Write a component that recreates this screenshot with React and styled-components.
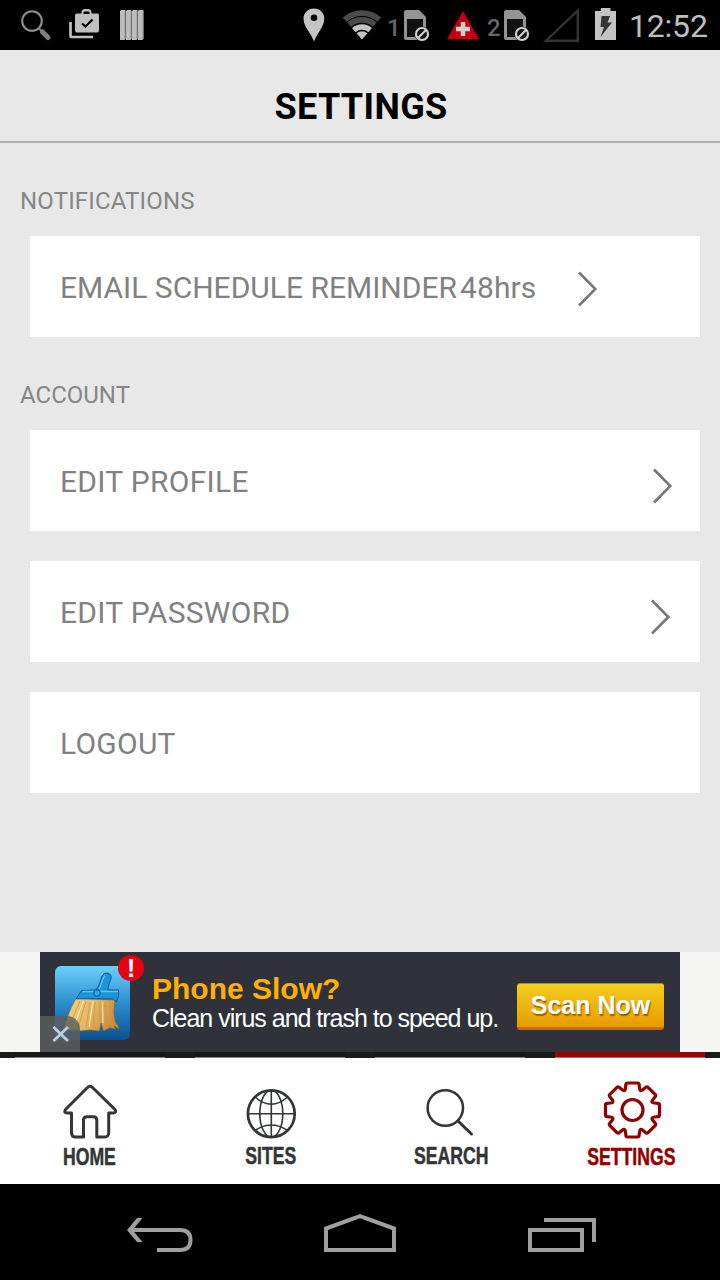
import React from 'react';
import styled, { createGlobalStyle } from 'styled-components';

const GlobalStyle = createGlobalStyle`
  body {
    margin: 0;
    background: #e8e8e8;
  }

  * {
    box-sizing: border-box;
  }

  svg {
    display: block;
    flex: none;
    overflow: visible;
  }
`;

const Screen = styled.div`
  display: flex;
  flex-direction: column;
  width: 720px;
  height: 1280px;
  overflow: hidden;
  background: #e8e8e8;
  font-family: Roboto, sans-serif;
`;

/* status bar */

const StatusBar = styled.header`
  display: flex;
  justify-content: space-between;
  height: 50px;
  background: #000;
`;

const StatusGroup = styled.div`
  display: flex;
  align-items: flex-start;
  padding: ${props => props.$padding || "0"};
`;

const StatusIcon = styled.svg.attrs(props => ({
  viewBox: `0 0 ${props.width} 50`,
  height: 50,
  fill: "none",
}))`
  margin-left: ${props => props.$gap || 0}px;
`;

const SimNumber = styled.span`
  width: 15px;
  margin-left: ${props => props.$gap}px;
  color: #666;
  font-size: 24px;
  font-weight: 500;
  line-height: 56px;
`;

const Clock = styled.span`
  width: 80px;
  margin-left: 13px;
  color: #bebebe;
  font-size: 32px;
  letter-spacing: -0.2px;
  line-height: 52px;
  white-space: nowrap;
`;

/* page */

const TitleBar = styled.div`
  height: 93px;
  border-bottom: 2px solid #abb0b2;
  text-align: center;
`;

const Title = styled.h1`
  margin: 0;
  padding-left: 2px;
  color: #000;
  font-size: 36px;
  font-weight: 700;
  letter-spacing: 0.35px;
  line-height: 114px;
`;

const Content = styled.main`
  display: flex;
  flex-direction: column;
  flex: 1;
`;

const SectionTitle = styled.h2`
  height: 93px;
  margin: 0;
  padding-left: 20px;
  color: #868686;
  font-size: 24px;
  font-weight: 400;
  letter-spacing: ${props => props.$tracking || 0}px;
  line-height: 117px;
`;

const Section = styled.section`
  display: flex;
  flex-direction: column;
`;

const Rows = styled.div`
  display: flex;
  flex-direction: column;
  gap: 30px;
  padding: 0 20px 0 30px;
`;

const Row = styled.div`
  display: flex;
  align-items: center;
  height: 101px;
  padding: 2px ${props => props.$end || 28}px 0 30px;
  background: #fff;
  color: #818181;
  font-size: 30px;
  white-space: nowrap;
`;

const RowLabel = styled.span`
  flex: ${props => (props.$fit ? "none" : 1)};
  width: ${props => (props.$fit ? "399px" : "auto")};
  letter-spacing: ${props => props.$tracking || 0}px;
`;

const RowValue = styled.span`
  width: 119px;
  padding-left: 1px;
  letter-spacing: 0.1px;
`;

const Arrow = styled.svg.attrs({
  width: 19,
  height: 36,
  viewBox: "0 0 19 36",
  fill: "none",
  stroke: "#777",
  strokeWidth: 2.6,
})`
  margin-top: ${props => props.$drop || 0}px;
`;

/* ad */

const AdStrip = styled.aside`
  display: flex;
  justify-content: center;
  height: 100px;
  background: #f5f5f3;
`;

const Ad = styled.div`
  position: relative;
  display: flex;
  width: 640px;
  padding-left: 15px;
  background: #2f323a;
  font-family: "Liberation Sans", Arial, sans-serif;
`;

const AppIcon = styled.svg.attrs({ width: 75, height: 74, viewBox: "0 0 75 74" })`
  margin-top: 14px;
`;

const Badge = styled.span`
  position: absolute;
  top: 3px;
  left: 78px;
  width: 26px;
  height: 26px;
  border-radius: 50%;
  background: #e60012;
  color: #fff;
  font-size: 26px;
  font-weight: 700;
  line-height: 26px;
  text-align: center;
`;

const CloseAd = styled.span`
  position: absolute;
  bottom: 0;
  left: 0;
  display: flex;
  width: 40px;
  height: 36px;
  border-radius: 0 13px 0 0;
  background: rgba(94, 94, 94, 0.82);
`;

const AdCopy = styled.div`
  width: 387px;
  padding: 20px 0 0 22px;
  white-space: nowrap;
`;

const AdHeadline = styled.div`
  color: #ffb000;
  font-size: 30px;
  font-weight: 700;
  line-height: 34px;
`;

const AdText = styled.div`
  margin-top: -2px;
  color: #fff;
  font-size: 25px;
  letter-spacing: -1.02px;
  line-height: 28px;
`;

const AdButton = styled.div`
  width: 147px;
  height: 47px;
  margin-top: 31px;
  border-top: 1px solid #b98a12;
  border-bottom: 3px solid #c76a05;
  border-radius: 3px;
  background: linear-gradient(#f2cf1d, #e89b00);
  color: #fff;
  font-size: 25px;
  font-weight: 700;
  line-height: 43px;
  text-align: center;
  text-shadow: 1px 2px 1px rgba(120, 70, 0, 0.7);
  white-space: nowrap;
`;

/* tabs */

const TabBar = styled.nav`
  display: flex;
  height: 132px;
  background: #fefefe;
`;

const Tab = styled.div`
  display: flex;
  flex-direction: column;
  align-items: center;
  width: 180px;
  color: ${props => (props.$active ? "#900000" : "#333536")};
`;

const TabEdge = styled.div`
  width: 100%;
  height: 6px;
  padding: 0 15px;
  background: #1c1b1c;
`;

const TabMarker = styled.div`
  height: 6px;
  border-bottom: 1px solid ${props => (props.$active ? "#bd6a6a" : "#848484")};
  background: ${props => (props.$active ? "#8f0805" : "#181818")};
`;

const TabIcon = styled.svg.attrs({
  width: 60,
  height: 60,
  viewBox: "0 0 60 60",
  fill: "none",
  stroke: "currentColor",
  strokeLinejoin: "round",
})`
  margin-top: 22px;
`;

const TabLabel = styled.span`
  margin-top: ${props => props.$top}px;
  padding: 0 ${props => props.$back || 0}px 0 ${props => props.$shift || 0}px;
  font-family: "Liberation Sans", Arial, sans-serif;
  font-size: 23.5px;
  font-weight: 700;
  line-height: 26px;
  transform: scaleX(0.75);
  white-space: nowrap;
  -webkit-text-stroke: 0.5px currentColor;
`;

/* system navigation */

const SystemBar = styled.footer`
  display: flex;
  gap: 131px;
  height: 96px;
  padding-left: 127px;
  background: #000;
`;

const SystemIcon = styled.svg.attrs(props => ({
  height: 96,
  viewBox: `0 0 ${props.width} 96`,
  fill: "none",
  stroke: "#9f9f9f",
  strokeWidth: 4,
}))``;

const Chevron = ({ drop }) => (
  <Arrow $drop={drop}>
    <path d="M1 1.5L17.3 18L1 34.5" />
  </Arrow>
);

const Sim = () => (
  <StatusIcon width={26}>
    <path d="M2 10H15L22 17V40H2Q0 40 0 38V12Q0 10 2 10Z" fill="#949494" />
    <path d="M3 19H19V37H3Z" fill="#111" />
    <circle cx="18" cy="34" r="7.4" fill="#111" />
    <circle cx="18" cy="34" r="6" stroke="#cfcfcf" strokeWidth="2.2" />
    <path d="M14 38L22 30" stroke="#cfcfcf" strokeWidth="2.2" />
  </StatusIcon>
);

const Broom = () => (
  <AppIcon>
    <defs>
      <linearGradient id="tile" x1="0" y1="0" x2="0" y2="1">
        <stop offset="0" stopColor="#6dcffb" />
        <stop offset="0.5" stopColor="#2c8fcf" />
        <stop offset="1" stopColor="#09508f" />
      </linearGradient>
      <linearGradient id="straw" x1="0" y1="0" x2="1" y2="0.3">
        <stop offset="0" stopColor="#f3d888" />
        <stop offset="0.55" stopColor="#e2b866" />
        <stop offset="1" stopColor="#c98f3c" />
      </linearGradient>
    </defs>
    <rect width="75" height="74" rx="6" fill="url(#tile)" />
    <path
      d="M21.5 32C16 40 12 52 9 62Q12 65.500 18 64L26 65L35 64L44.500 65L46 57L48.500 65L55 62L61 63L59 60L64 63Q64 60 61 57C58 49 59 43 60 34Z"
      fill="url(#straw)"
      stroke="#8b6322"
      strokeWidth="0.7"
    />
    <path
      d="M25 35L14 61M31 35L23 62M35 36L31 62M40 36L38 62M45 36V54M50 36L51 60M55 36L56 60"
      fill="none"
      stroke="#c9994a"
      strokeWidth="0.8"
    />
    <path
      d="M28.5 35L19 60M38 35L34 61M47.500 36L48 57"
      fill="none"
      stroke="#ffedb0"
      strokeWidth="1"
    />
    <path
      d="M26.500 24.500L41 24C44.500 19 45.500 14 47 10Q49 6 53 7.200Q57 8.500 56 12.500C54.500 17 53 20 53 24H63.500Q64.500 30 61.500 36L58 32.800H21Z"
      fill="#1b94dc"
      stroke="#0c5797"
      strokeWidth="1"
    />
    <path d="M27.500 25.500H63M44 23C47 18 47 13 50 9.500" fill="none" stroke="#5cc5fa" strokeWidth="1.300" />
    <circle cx="42" cy="27" r="3.300" fill="#2aa5e8" stroke="#0c5797" />
  </AppIcon>
);

// One tooth plus the notch after it, repeated every 45 degrees.
const gearPath = (cx, cy) => {
  const point = (x, y, turn) => {
    const a = (turn * Math.PI) / 4;
    const px = cx + x * Math.cos(a) - y * Math.sin(a);
    const py = cy + x * Math.sin(a) + y * Math.cos(a);
    return `${px.toFixed(2)} ${py.toFixed(2)}`;
  };
  let d = `M${point(-7, -22, 0)}`;
  for (let i = 0; i < 8; i++) {
    d += `L${point(-6.6, -25.5, i)}Q${point(-6.5, -27, i)} ${point(-5, -27, i)}`;
    d += `L${point(5, -27, i)}Q${point(6.5, -27, i)} ${point(6.6, -25.5, i)}`;
    d += `L${point(7, -22, i)}Q${point(7.4, -17.8, i)} ${point(-7, -22, i + 1)}`;
  }
  return `${d}Z`;
};

const tabs = [
  {
    name: "HOME",
    top: 4,
    back: 1,
    icon: (
      <path
        d="M27.500 7.500Q30 5 32.500 7.500L55 29.500Q57 33 53 33H48.700V53Q48.500 57 44.500 57H36.800V40Q36.800 36.700 33.500 36.700H27Q23.500 36.700 23.500 40V57H15.500Q11.500 57 11.500 52.500V33H7Q3.500 33 5.500 29.500Z"
        strokeWidth="3"
      />
    ),
  },
  {
    name: "SITES",
    top: 3,
    shift: 1,
    icon: (
      <>
        <circle cx="31.3" cy="33.7" r="23.4" strokeWidth="2.7" />
        <g strokeWidth="1.6">
          <ellipse cx="31.3" cy="33.7" rx="11.500" ry="23.400" />
          <path d="M31.300 10V57M8 33.700H55M15 17Q31.300 31.500 47.600 17M15 50.400Q31.300 39.500 47.600 50.400" />
        </g>
      </>
    ),
  },
  {
    name: "SEARCH",
    top: 3,
    shift: 3,
    icon: (
      <>
        <circle cx="25.3" cy="28" r="17.7" strokeWidth="2.5" />
        <path d="M38 41L51.500 54" strokeWidth="3" strokeLinecap="round" />
      </>
    ),
  },
  {
    name: "SETTINGS",
    top: 4,
    shift: 3,
    active: true,
    icon: (
      <>
        <path d={gearPath(32.5, 30)} strokeWidth="3.2" />
        <circle cx="32.5" cy="30" r="10.5" strokeWidth="3.2" />
      </>
    ),
  },
];

const App = () => {
  return (
    <Screen>
      <GlobalStyle />
      <StatusBar>
        <StatusGroup $padding="0 0 0 21px">
          <StatusIcon width={30}>
            <circle cx="11" cy="21" r="9.8" stroke="#929292" strokeWidth="2" />
            <path d="M17.500 28L21 31.500" stroke="#808080" strokeWidth="2" />
            <path d="M21.500 32L27 37.500" stroke="#808080" strokeWidth="5" strokeLinecap="round" />
          </StatusIcon>
          <StatusIcon width={30} $gap={18}>
            <path d="M8 13.500H12.500V12Q13 9 16 9H19Q22 9 22.500 12V13.500H28Q30 13.500 30 15.500V30.500Q30 32.500 28 32.500H8Q6 32.500 6 30.500V15.500Q6 13.500 8 13.500Z" fill="#c0c0c0" />
            <path d="M14.500 14V12.500Q14.500 11.500 15.500 11.500H19.500Q20.500 11.500 20.500 12.500V14Z" fill="#000" />
            <path d="M13 23.500L16.500 26.500L23.500 19.500" stroke="#000" strokeWidth="2.2" />
            <path d="M1.500 22V35.500Q1.500 37 3 37H24" stroke="#c0c0c0" strokeWidth="2.700" />
          </StatusIcon>
          <StatusIcon width={24} $gap={21}>
            {[0, 6, 12, 18].map(x => (
              <g key={x}>
                <path d={`M${x} 11L${x + 1} 10H${x + 5.5}V38L${x + 4.5} 40H${x}Z`} fill="#bcbcbc" />
                <path d={`M${x + 5.3} 11V39`} stroke="#747474" strokeWidth="1" />
              </g>
            ))}
          </StatusIcon>
        </StatusGroup>
        <StatusGroup $padding="0 11px 0 0">
          <StatusIcon width={22}>
            <path
              d="M10 8.500C16 8.500 20.300 13 20.300 18.500C20.300 27 13 33 10 41.500C7 33 -0.500 27 -0.500 18.500C-0.500 13 4 8.500 10 8.500ZM10 14.500A3.300 3.300 0 1 0 10 21.100A3.300 3.300 0 1 0 10 14.500Z"
              fill="#c4c4c4"
              fillRule="evenodd"
            />
          </StatusIcon>
          <StatusIcon width={39} $gap={17}>
            <path d="M1.700 19.600A26.400 26.400 0 0 1 36.300 19.600" stroke="#4a4a4a" strokeWidth="5.800" />
            <path d="M6.100 24.700A19.600 19.600 0 0 1 31.900 24.700" stroke="#4a4a4a" strokeWidth="5.600" />
            <path d="M10.800 30.100A12.500 12.500 0 0 1 27.200 30.100" stroke="#c4c4c4" strokeWidth="5.400" />
            <path d="M13.500 33.200A8.400 8.400 0 0 1 24.500 33.200L19 39.500Z" fill="#c4c4c4" />
          </StatusIcon>
          <SimNumber $gap={5}>1</SimNumber>
          <StatusIcon width={2} />
          <Sim />
          <StatusIcon width={32} $gap={17}>
            <path d="M16 11L32 39H0Z" fill="#c3000d" />
            <path d="M16 22V36M9 29H23" stroke="#d0d0d0" strokeWidth="4.500" />
          </StatusIcon>
          <SimNumber $gap={8}>2</SimNumber>
          <StatusIcon width={2} />
          <Sim />
          <StatusIcon width={36} $gap={13}>
            <path d="M34.800 10.500V40.700H3Z" stroke="#333" strokeWidth="2.400" />
          </StatusIcon>
          <StatusIcon width={21} $gap={16}>
            <path d="M6 8H15.500V11H21V40H0V11H6Z" fill="#c4c4c4" />
            <path d="M6.500 16H15L12.500 22.500H17L5.500 37L9 27H5.500Z" fill="#333" />
          </StatusIcon>
          <Clock>12:52</Clock>
        </StatusGroup>
      </StatusBar>

      <TitleBar>
        <Title>SETTINGS</Title>
      </TitleBar>

      <Content>
        <Section>
          <SectionTitle $tracking={0.17}>NOTIFICATIONS</SectionTitle>
          <Rows>
            <Row>
              <RowLabel $fit>EMAIL SCHEDULE REMINDER</RowLabel>
              <RowValue>48hrs</RowValue>
              <Chevron drop={2} />
            </Row>
          </Rows>
        </Section>
        <Section>
          <SectionTitle>ACCOUNT</SectionTitle>
          <Rows>
            <Row>
              <RowLabel $tracking={0.3}>EDIT PROFILE</RowLabel>
              <Chevron drop={8} />
            </Row>
            <Row $end={30}>
              <RowLabel $tracking={0.28}>EDIT PASSWORD</RowLabel>
              <Chevron drop={8} />
            </Row>
            <Row>
              <RowLabel $tracking={0.25}>LOGOUT</RowLabel>
            </Row>
          </Rows>
        </Section>
      </Content>

      <AdStrip>
        <Ad>
          <Broom />
          <Badge>!</Badge>
          <AdCopy>
            <AdHeadline>Phone Slow?</AdHeadline>
            <AdText>Clean virus and trash to speed up.</AdText>
          </AdCopy>
          <AdButton>Scan Now</AdButton>
          <CloseAd>
            <svg width="40" height="36" viewBox="0 0 40 36">
              <path d="M13.500 11L28 25M28 11L13.500 25" stroke="#b9cfe3" strokeWidth="2.800" />
            </svg>
          </CloseAd>
        </Ad>
      </AdStrip>

      <TabBar>
        {tabs.map(tab => (
          <Tab key={tab.name} $active={tab.active}>
            <TabEdge>
              <TabMarker $active={tab.active} />
            </TabEdge>
            <TabIcon>{tab.icon}</TabIcon>
            <TabLabel $top={tab.top} $shift={tab.shift} $back={tab.back}>{tab.name}</TabLabel>
          </Tab>
        ))}
      </TabBar>

      <SystemBar>
        <SystemIcon width={66}>
          <path d="M2 46H53Q63.500 46 63.500 56Q63.500 66 53 66H30" />
          <path d="M10 34H15.500L5.500 46L15.500 58H10L0 46Z" fill="#9f9f9f" stroke="none" />
        </SystemIcon>
        <SystemIcon width={72}>
          <path d="M2 66V44.500L36 32.200L70 44.500V66Z" />
        </SystemIcon>
        <SystemIcon width={69}>
          <path d="M3 46H55V66H3ZM17 36H67V58" />
        </SystemIcon>
      </SystemBar>
    </Screen>
  );
};

export default App;
